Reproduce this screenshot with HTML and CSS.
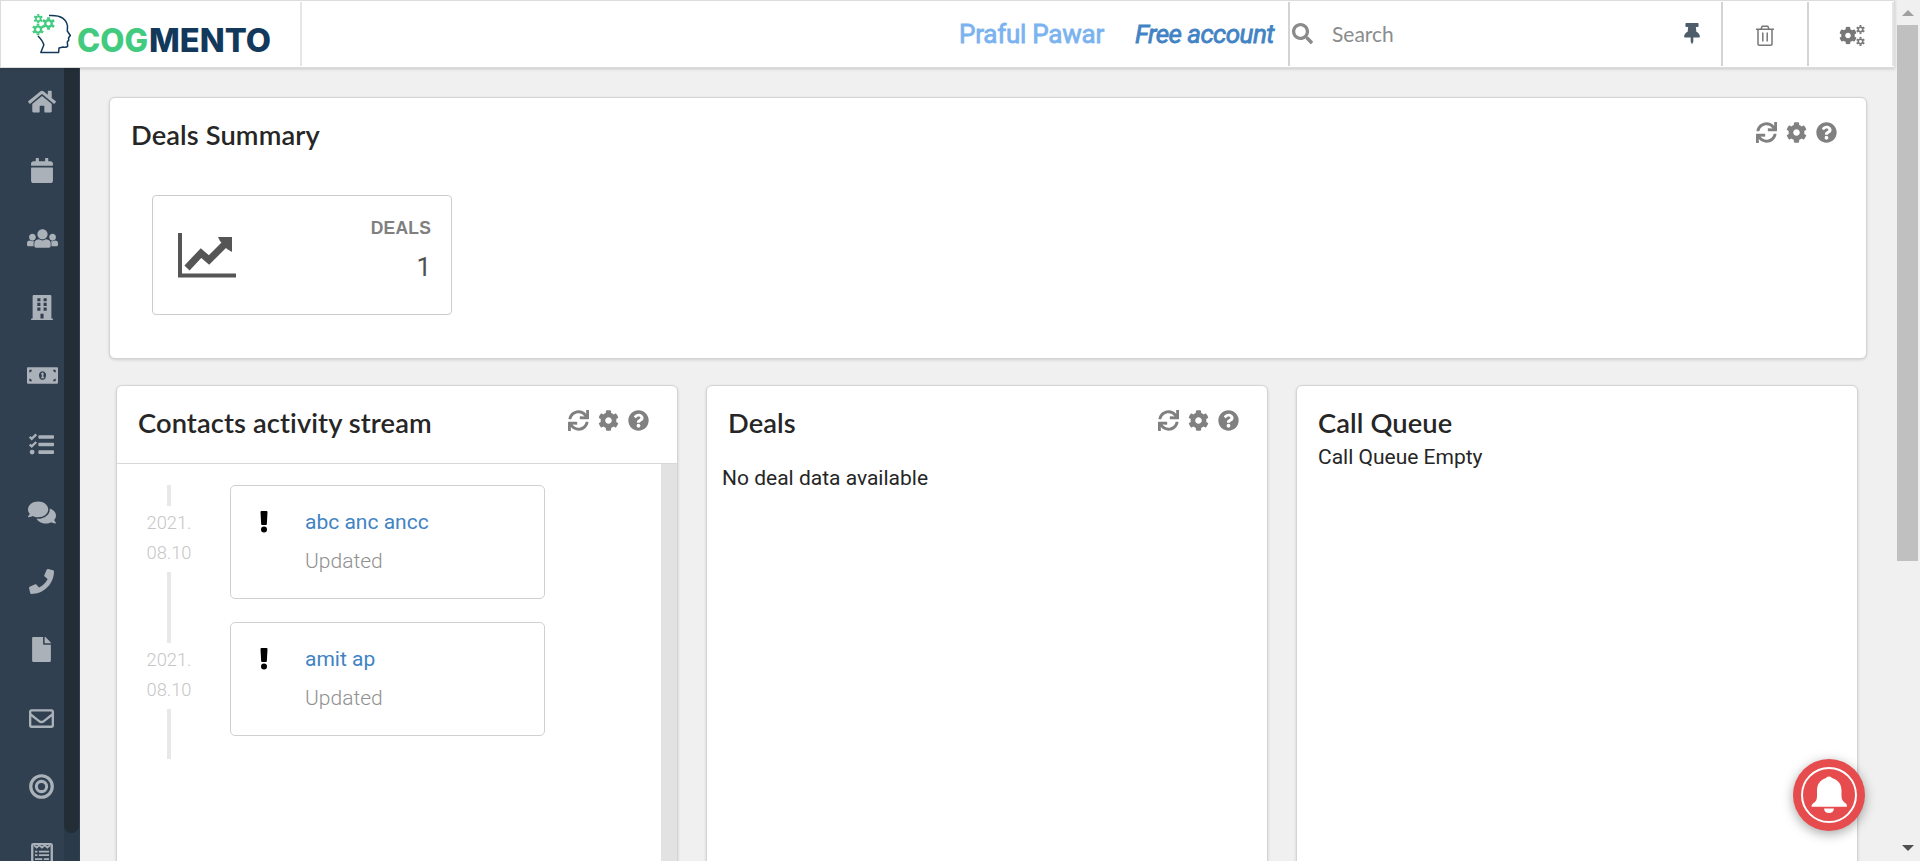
FILE: index.html
```html
<!DOCTYPE html>
<html lang="en">
<head>
<meta charset="utf-8">
<title>Cogmento CRM</title>
<link rel="stylesheet" href="styles.css">
</head>
<body>
<svg class="defs" aria-hidden="true">
  <symbol id="sync" viewBox="0 0 512 512"><path d="M440.935 12.574l3.966 82.766C399.416 41.904 331.674 8 256 8 134.813 8 33.933 94.924 12.296 209.824 10.908 217.193 16.604 224 24.103 224h49.084c5.57 0 10.377-3.842 11.676-9.259C103.407 137.408 172.931 80 256 80c60.893 0 114.512 30.856 146.104 77.801l-101.53-4.865c-6.845-.328-12.574 5.133-12.574 11.986v47.411c0 6.627 5.373 12 12 12h200.333c6.627 0 12-5.373 12-12V12c0-6.627-5.373-12-12-12h-47.411c-6.853 0-12.315 5.729-11.987 12.574zM256 432c-60.895 0-114.517-30.858-146.109-77.805l101.868 4.871c6.845.327 12.573-5.134 12.573-11.986v-47.412c0-6.627-5.373-12-12-12H12c-6.627 0-12 5.373-12 12V500c0 6.627 5.373 12 12 12h47.385c6.863 0 12.328-5.745 11.985-12.599l-4.129-82.575C112.725 470.166 180.405 504 256 504c121.187 0 222.067-86.924 243.704-201.824 1.388-7.369-4.308-14.176-11.807-14.176h-49.084c-5.57 0-10.377 3.842-11.676 9.259C408.593 374.592 339.069 432 256 432z"/></symbol>
  <symbol id="cog" viewBox="0 0 512 512"><path d="M444.788 291.1l42.616 24.599c4.867 2.809 7.126 8.618 5.459 13.985-11.07 35.642-29.97 67.842-54.689 94.586a12.016 12.016 0 0 1-14.832 2.254l-42.584-24.595a191.577 191.577 0 0 1-60.759 35.13v49.182a12.01 12.01 0 0 1-9.377 11.718c-34.956 7.85-72.499 8.256-109.219.007-5.49-1.233-9.403-6.096-9.403-11.723v-49.184a191.555 191.555 0 0 1-60.759-35.13l-42.584 24.595a12.016 12.016 0 0 1-14.832-2.254c-24.718-26.744-43.619-58.944-54.689-94.586-1.667-5.366.592-11.175 5.459-13.985L67.212 291.1a193.48 193.48 0 0 1 0-70.199l-42.616-24.599c-4.867-2.809-7.126-8.618-5.459-13.985 11.07-35.642 29.97-67.842 54.689-94.586a12.016 12.016 0 0 1 14.832-2.254l42.584 24.595a191.577 191.577 0 0 1 60.759-35.13V25.759a12.01 12.01 0 0 1 9.377-11.718c34.956-7.85 72.499-8.256 109.219-.007 5.49 1.233 9.403 6.096 9.403 11.723v49.184a191.555 191.555 0 0 1 60.759 35.13l42.584-24.595a12.016 12.016 0 0 1 14.832 2.254c24.718 26.744 43.619 58.944 54.689 94.586 1.667 5.366-.592 11.175-5.459 13.985L444.788 220.9a193.485 193.485 0 0 1 0 70.2zM336 256c0-44.112-35.888-80-80-80s-80 35.888-80 80 35.888 80 80 80 80-35.888 80-80z"/></symbol>
  <symbol id="help" viewBox="0 0 512 512"><path d="M504 256c0 136.997-111.043 248-248 248S8 392.997 8 256C8 119.083 119.043 8 256 8s248 111.083 248 248zM262.655 90c-54.497 0-89.255 22.957-116.549 63.758-3.536 5.286-2.353 12.415 2.715 16.258l34.699 26.31c5.205 3.947 12.621 3.008 16.665-2.122 17.864-22.658 30.113-35.797 57.303-35.797 20.429 0 45.698 13.148 45.698 32.958 0 14.976-12.363 22.667-32.534 33.976C247.128 238.528 216 254.941 216 296v4c0 6.627 5.373 12 12 12h56c6.627 0 12-5.373 12-12v-1.333c0-28.462 83.186-29.647 83.186-106.667 0-58.002-60.165-102-116.531-102zM256 338c-25.365 0-46 20.635-46 46 0 25.364 20.635 46 46 46s46-20.636 46-46c0-25.365-20.635-46-46-46z"/></symbol>
  <symbol id="bang" viewBox="0 0 20 44"><path d="M5 0h10a2 2 0 0 1 2 2l-1.300 24a2 2 0 0 1-2 2H6.300a2 2 0 0 1-2-2L3 2a2 2 0 0 1 2-2z"/><circle cx="10" cy="37" r="6"/></symbol>
  <symbol id="gear" viewBox="-10 -10 20 20"><circle r="5" fill="none" stroke="currentColor" stroke-width="3.6"/><path fill="none" stroke="currentColor" stroke-width="4.4" d="M0-6.2V-9.8M0 6.2V9.8M5.4-3.1L8.5-4.9M5.4 3.1L8.5 4.9M-5.4-3.1L-8.5-4.9M-5.4 3.1L-8.5 4.9"/></symbol>
</svg>

<div class="app">
  <header class="topbar">
    <div class="brand">
      <svg width="300" height="66" viewBox="0 0 300 66">
        <path class="head" d="M49 15.500C57 15 66 17 67.500 26L67.300 31L70.300 35.500L68.500 38L68.800 40L67.300 42L67.700 46Q66.500 48 63 47L59 48L58.600 52.500H40.800L43.800 45Q43 41 38 36"/>
        <g class="gears">
          <use href="#gear" x="33.500" y="14" width="9.500" height="9.500"/>
          <use href="#gear" x="42" y="17" width="13" height="13"/>
          <use href="#gear" x="32" y="23.500" width="12" height="12"/>
        </g>
        <text class="wordmark green" x="77" y="51.500" textLength="71" lengthAdjust="spacingAndGlyphs">COG</text>
        <text class="wordmark navy" x="149" y="51.500" textLength="122" lengthAdjust="spacingAndGlyphs">MENTO</text>
      </svg>
    </div>
    <div class="account">
      <span class="user">Praful Pawar</span>
      <span class="plan">Free account</span>
    </div>
    <div class="search">
      <svg class="i21 search-icon" viewBox="0 0 512 512"><path d="M505 442.700L405.300 343c-4.500-4.500-10.600-7-17-7H372c27.600-35.300 44-79.700 44-128C416 93.100 322.900 0 208 0S0 93.100 0 208s93.100 208 208 208c48.300 0 92.700-16.400 128-44v16.300c0 6.400 2.500 12.500 7 17l99.700 99.700c9.400 9.400 24.600 9.400 33.900 0l28.300-28.300c9.400-9.400 9.400-24.600.1-34zM208 336c-70.700 0-128-57.200-128-128 0-70.700 57.200-128 128-128 70.700 0 128 57.200 128 128 0 70.700-57.200 128-128 128z"/></svg>
      <span class="search-text">Search</span>
      <svg class="pin" viewBox="0 0 384 512"><path d="M298.028 214.267L285.793 96H328c13.255 0 24-10.745 24-24V24c0-13.255-10.745-24-24-24H56C42.745 0 32 10.745 32 24v48c0 13.255 10.745 24 24 24h42.207L85.972 214.267C37.465 236.820 0 277.261 0 328c0 13.255 10.745 24 24 24h136v104.007c0 1.242.289 2.467.845 3.578l24 48c2.941 5.882 11.364 5.893 14.311 0l24-48a8.008 8.008 0 0 0 .845-3.578V352h136c13.255 0 24-10.745 24-24-.001-51.183-37.983-91.420-85.973-113.733z"/></svg>
    </div>
    <div class="tool trash">
      <svg width="18" height="21" viewBox="0 0 18 21"><path d="M0 4.200H18M5 4L6.200 1.200H11.800L13 4M2 4.500V19Q2 20.200 3.200 20.200H14.800Q16 20.200 16 19V4.500M6.800 7.500V16.500M11.200 7.500V16.500"/></svg>
    </div>
    <div class="tool settings">
      <svg width="27" height="21" viewBox="0 0 27 21"><use href="#cog" x="0" y="1.500" width="18" height="18"/><g class="mini"><use href="#gear" x="17" y="0" width="9" height="9"/><use href="#gear" x="17" y="12" width="9" height="9"/></g></svg>
    </div>
  </header>

  <div class="body">
    <nav class="sidebar">
      <div class="nav-items">
        <svg viewBox="0 0 576 512" width="28"><path d="M488 312.700V456c0 13.300-10.700 24-24 24H348c-6.600 0-12-5.400-12-12V356c0-6.600-5.400-12-12-12h-72c-6.600 0-12 5.400-12 12v112c0 6.600-5.400 12-12 12H112c-13.300 0-24-10.700-24-24V312.700c0-3.600 1.600-7 4.400-9.300l188-154.800c4.400-3.600 10.800-3.600 15.300 0l188 154.800c2.700 2.300 4.300 5.700 4.300 9.300zm83.600-60.900L488 182.900V44.400c0-6.600-5.400-12-12-12h-56c-6.600 0-12 5.400-12 12V117l-89.500-73.700c-17.700-14.600-43.300-14.600-61 0L4.400 251.800c-5.100 4.200-5.800 11.800-1.600 16.900l25.500 31c4.200 5.100 11.800 5.800 16.900 1.600l235.200-193.700c4.400-3.600 10.800-3.600 15.300 0l235.200 193.700c5.100 4.200 12.700 3.500 16.900-1.600l25.500-31c4.200-5.200 3.400-12.700-1.700-16.900z"/></svg>
        <svg viewBox="0 0 448 512" width="22"><path d="M12 192h424c6.600 0 12 5.400 12 12v260c0 26.500-21.500 48-48 48H48c-26.500 0-48-21.500-48-48V204c0-6.600 5.400-12 12-12zm436-44v-36c0-26.500-21.500-48-48-48h-48V12c0-6.600-5.400-12-12-12h-40c-6.600 0-12 5.400-12 12v52H160V12c0-6.600-5.400-12-12-12h-40c-6.600 0-12 5.400-12 12v52H48C21.500 64 0 85.500 0 112v36c0 6.600 5.400 12 12 12h424c6.600 0 12-5.400 12-12z"/></svg>
        <svg class="wide" viewBox="0 0 640 512" width="31"><path d="M320 64c57.990 0 105 47.010 105 105s-47.010 105-105 105-105-47.010-105-105S262.010 64 320 64zm113.463 217.366l-39.982-9.996c-49.168 35.365-108.766 27.473-146.961 0l-39.982 9.996C174.485 289.379 152 318.177 152 351.216V412c0 19.882 16.118 36 36 36h264c19.882 0 36-16.118 36-36v-60.784c0-33.039-22.485-61.837-54.537-69.850zM528 300c38.660 0 70-31.340 70-70s-31.340-70-70-70-70 31.340-70 70 31.340 70 70 70zm-416 0c38.660 0 70-31.340 70-70s-31.340-70-70-70-70 31.340-70 70 31.340 70 70 70zm24 112v-60.784c0-16.551 4.593-32.204 12.703-45.599-29.988 14.720-63.336 8.708-85.690-7.370l-26.655 6.664C14.990 310.252 0 329.452 0 351.477V392c0 13.255 10.745 24 24 24h112.169a52.417 52.417 0 0 1-.169-4zm467.642-107.090l-26.655-6.664c-27.925 20.086-60.890 19.233-85.786 7.218C499.369 318.893 504 334.601 504 351.216V412c0 1.347-.068 2.678-.169 4H616c13.255 0 24-10.745 24-24v-40.523c0-22.025-14.990-41.225-36.358-46.567z"/></svg>
        <svg viewBox="0 0 448 512" width="22"><path fill-rule="evenodd" d="M436 480h-20V24c0-13.300-10.700-24-24-24H56C42.700 0 32 10.700 32 24v456H12c-6.600 0-12 5.400-12 12v20h448v-20c0-6.600-5.400-12-12-12zM128 64h64v64h-64zM256 64h64v64h-64zM128 160h64v64h-64zM256 160h64v64h-64zM128 256h64v64h-64zM256 256h64v64h-64zM192 384h64v96h-64z"/></svg>
        <svg class="wide" viewBox="0 0 640 512" width="31"><path fill-rule="evenodd" d="M16 88h608q16 0 16 16v304q0 16-16 16H16q-16 0-16-16V104q0-16 16-16zM48 136v56q48 0 56-56zM592 136v56q-48 0-56-56zM48 376v-56q48 0 56 56zM592 376v-56q-48 0-56 56zM320 168a74 88 0 1 0 .1 0z"/><path d="M320 196L292 210V234H306V290H288V314H358V290H340V196z"/></svg>
        <svg viewBox="0 0 512 512" width="25"><path d="M208 64h288q16 0 16 16v40q0 16-16 16H208q-16 0-16-16V80q0-16 16-16zM208 220h288q16 0 16 16v40q0 16-16 16H208q-16 0-16-16v-40q0-16 16-16zM208 376h288q16 0 16 16v40q0 16-16 16H208q-16 0-16-16v-40q0-16 16-16z"/><circle cx="64" cy="412" r="50"/><path fill="none" stroke="currentColor" stroke-width="48" d="M14 100L56 140L148 48M14 256L56 296L148 204"/></svg>
        <svg viewBox="0 0 576 512" width="28"><path d="M416 192c0-88.400-93.100-160-208-160S0 103.600 0 192c0 34.300 14.100 65.900 38 92-13.400 30.200-35.500 54.200-35.800 54.500-2.200 2.300-2.800 5.700-1.500 8.700S4.800 352 8 352c36.600 0 66.900-12.300 88.700-25 32.200 15.700 70.300 25 111.300 25 114.900 0 208-71.600 208-160zm122 220c23.900-26 38-57.700 38-92 0-66.900-53.500-124.200-129.300-148.100.9 6.600 1.300 13.300 1.300 20.100 0 105.900-107.700 192-240 192-10.800 0-21.300-.8-31.700-1.900C207.800 439.600 281.800 480 368 480c41 0 79.100-9.200 111.300-25 21.800 12.700 52.100 25 88.700 25 3.200 0 6.100-1.900 7.300-4.800 1.300-2.900.7-6.300-1.500-8.700-.3-.3-22.400-24.200-35.800-54.500z"/></svg>
        <svg viewBox="0 0 512 512" width="25"><path d="M493.400 24.600l-104-24c-11.300-2.600-22.900 3.300-27.500 13.900l-48 112c-4.200 9.800-1.400 21.300 6.900 28l60.600 49.600c-36 76.700-98.900 140.500-177.200 177.200l-49.600-60.600c-6.800-8.300-18.200-11.100-28-6.900l-112 48C3.900 366.500-2 378.100.6 389.400l24 104C27.100 504.200 36.700 512 48 512c256.100 0 464-207.500 464-464 0-11.200-7.700-20.900-18.600-23.400z"/></svg>
        <svg viewBox="0 0 384 512" width="19"><path d="M224 136V0H24C10.700 0 0 10.700 0 24v464c0 13.300 10.700 24 24 24h336c13.300 0 24-10.700 24-24V160H248c-13.200 0-24-10.800-24-24zm160-14.100v6.100H256V0h6.100c6.400 0 12.500 2.500 17 7l97.900 98c4.500 4.500 7 10.600 7 16.900z"/></svg>
        <svg viewBox="0 0 512 512" width="25"><path d="M464 64H48C21.490 64 0 85.490 0 112v288c0 26.510 21.490 48 48 48h416c26.510 0 48-21.490 48-48V112c0-26.510-21.490-48-48-48zm0 48v40.805c-22.422 18.259-58.168 46.651-134.587 106.490-16.841 13.247-50.201 45.072-73.413 44.701-23.208.375-56.579-31.459-73.413-44.701C106.180 199.465 70.425 171.067 48 152.805V112h416zM48 400V214.398c22.914 18.251 55.409 43.862 104.938 82.646 21.857 17.205 60.134 55.186 103.062 54.955 42.717.231 80.509-37.199 103.053-54.947 49.528-38.783 82.032-64.401 104.947-82.653V400H48z"/></svg>
        <svg viewBox="0 0 512 512" width="25"><g fill="none" stroke="currentColor"><circle cx="256" cy="256" r="220" stroke-width="66"/><circle cx="256" cy="256" r="105" stroke-width="62"/></g></svg>
        <svg viewBox="0 0 448 512" width="22"><g fill="none" stroke="currentColor"><rect x="24" y="24" width="400" height="464" rx="24" stroke-width="48"/><path stroke-width="34" d="M60 50L115 95L168 50L224 95L280 50L333 95L388 50"/><path stroke-width="36" d="M80 176H130M160 176H368M80 250H130M160 250H368M80 330H230M262 330H368"/></g></svg>
      </div>
      <div class="nav-scroll"><div class="nav-thumb"></div></div>
    </nav>

    <main class="content">
      <section class="card summary">
        <div class="card-head">
          <h2>Deals Summary</h2>
          <div class="actions"><svg><use href="#sync"/></svg><svg><use href="#cog"/></svg><svg><use href="#help"/></svg></div>
        </div>
        <div class="stat">
          <svg width="60" height="46" viewBox="0 0 60 46"><path class="axis" d="M3 0V42.500H59"/><path class="trend" d="M10 35L24 20L32 27L49 10"/><path class="tip" d="M41 4H55V19L50 16L43 8z"/></svg>
          <div class="stat-text"><div class="stat-label">DEALS</div><div class="stat-value">1</div></div>
        </div>
      </section>

      <div class="columns">
        <section class="card">
          <div class="card-head ruled">
            <h2>Contacts activity stream</h2>
            <div class="actions"><svg><use href="#sync"/></svg><svg><use href="#cog"/></svg><svg><use href="#help"/></svg></div>
          </div>
          <div class="stream">
            <div class="events">
              <div class="event">
                <div class="when"><i class="line first"></i><span>2021.</span><span>08.10</span><i class="line grow"></i></div>
                <div class="entry"><svg><use href="#bang"/></svg><div><a>abc anc ancc</a><p>Updated</p></div></div>
              </div>
              <div class="event">
                <div class="when"><i class="line first"></i><span>2021.</span><span>08.10</span><i class="line grow"></i></div>
                <div class="entry"><svg><use href="#bang"/></svg><div><a>amit ap</a><p>Updated</p></div></div>
              </div>
            </div>
            <div class="stream-scroll"></div>
          </div>
        </section>
        <section class="card">
          <div class="card-head">
            <h2>Deals</h2>
            <div class="actions"><svg><use href="#sync"/></svg><svg><use href="#cog"/></svg><svg><use href="#help"/></svg></div>
          </div>
          <p class="no-deals">No deal data available</p>
        </section>
        <section class="card">
          <div class="card-head"><h2>Call Queue</h2></div>
          <p class="queue">Call Queue Empty</p>
        </section>
      </div>
    </main>
  </div>
</div>

<div class="page-scroll">
  <svg width="12" height="6" viewBox="0 0 12 6"><path fill="#a0a0a0" d="M6 0L12 6H0z"/></svg>
  <div class="page-thumb"></div>
  <svg class="down" width="12" height="6" viewBox="0 0 12 6"><path fill="#505050" d="M6 6L12 0H0z"/></svg>
</div>

<div class="bell">
  <svg width="72" height="72" viewBox="0 0 72 72"><circle cx="36" cy="36" r="27" fill="none" stroke="#fff" stroke-width="2"/><path fill="#fff" d="M36 17.500C38 17.500 38.500 18.300 38.800 19C45 20.500 48.500 25 48.500 31.500V37C48.500 41 50.500 43 53 44.500Q54 45.200 54 47.800H18.500Q18.500 45.200 20 44.500C22.500 43 24 41 24 37V31.500C24 25 27.500 20.500 33.200 19C33.500 18.300 34 17.500 36 17.500zM31 49.500H41Q40.500 54 36 54T31 49.500z"/></svg>
</div>
</body>
</html>
```
FILE: styles.css
```css
* { box-sizing: border-box; }
html, body { height: 100%; }
body {
  margin: 0;
  display: flex;
  overflow: hidden;
  background: #f0f0f0;
  font-family: Roboto, "Liberation Sans", sans-serif;
  font-size: 21px;
  color: #262626;
}
h2, p { margin: 0; }
svg { display: block; flex: none; fill: currentColor; }
.defs { display: none; }

.app { width: 1895px; height: 861px; display: flex; flex-direction: column; flex: none; }

/* Top bar */
.topbar {
  height: 68px;
  flex: none;
  display: flex;
  background: #fff;
  border: 1px solid #dcdcdc;
  box-shadow: 0 1px 3px rgba(34, 36, 38, .2);
  z-index: 1;
  padding: 1px 0;
}
.brand { width: 301px; border-right: 2px solid #e6e6e6; height: 64px; }
.brand svg { margin: -2px 0 0 -1px; }
.head { fill: none; stroke: #12395b; stroke-width: 1.5; stroke-linejoin: round; }
.gears { color: #42cb7f; }
.wordmark { font: 800 32px Inter, sans-serif; }
.green { fill: #42cb7f; }
.navy { fill: #12395b; }
.account { flex: 1; display: flex; justify-content: flex-end; padding-right: 14px; gap: 31px; line-height: 64px; font-size: 26px; white-space: nowrap; -webkit-text-stroke: .8px currentColor; }
.user { color: #7ab3ef; letter-spacing: -.25px; }
.plan { color: #4183c4; font-style: italic; letter-spacing: -.55px; }
.search { width: 435px; border-left: 2px solid #d4d4d5; border-right: 2px solid #d4d4d5; display: flex; align-items: center; padding: 0 21px 0 2px; }
.i21 { width: 21px; height: 21px; }
.search-icon { color: #8b8b8b; margin-top: -2px; }
.search-text { font: 21px/24px Lato, sans-serif; color: #8c8c8c; margin-left: 19px; flex: 1; }
.pin { width: 16px; height: 21px; color: #4f5d6b; margin-top: -2px; }
.tool { width: 86px; border-right: 2px solid #d4d4d5; display: flex; align-items: center; justify-content: center; color: #777; padding-top: 3px; }
.trash svg { fill: none; stroke: currentColor; stroke-width: 1.5; }
.settings { width: 85px; border-right-color: #e4e4e4; padding-left: 4px; }

/* Sidebar */
.body { flex: 1; display: flex; min-height: 0; }
.sidebar { width: 80px; background: #304050; display: flex; overflow: hidden; flex: none; }
.nav-items { width: 64px; padding: 21px 0 0 19px; display: flex; flex-direction: column; gap: 43.5px; color: #aab1b9; align-items: center; }
.nav-items svg { height: 25px; }
.nav-items .wide { margin-right: -2px; }
.nav-scroll { width: 16px; background: #2a3a49; border-right: 1px solid #304050; }
.nav-thumb { height: 765px; background: #222d35; border-radius: 0 0 8px 8px; }

/* Cards */
.content { flex: 1; padding: 29px 28px 0 29px; display: flex; flex-direction: column; gap: 26px; min-height: 0; overflow: hidden; }
.card { background: #fff; border: 1px solid #d4d4d5; border-radius: 6px; box-shadow: 0 1px 3px rgba(0, 0, 0, .14); overflow: hidden; }
.summary { height: 262px; flex: none; }
.card-head { height: 78px; padding: 22px 28px 0 21px; display: flex; justify-content: space-between; }
.summary .card-head { padding-right: 29px; }
.ruled { border-bottom: 1px solid #d8d8d9; }
h2 { font: 600 27.3px/30px Lato, sans-serif; letter-spacing: .1px; color: #262626; white-space: nowrap; font-variant-ligatures: none; }
.actions { display: flex; gap: 9px; color: #808080; margin-top: 2px; }
.actions svg { width: 21px; height: 21px; }
.stat { width: 300px; height: 120px; margin: 19px 0 0 42px; border: 1px solid #ccc; border-radius: 4px; display: flex; justify-content: space-between; padding: 37px 20px 0 24px; }
.axis { fill: none; stroke: #555; stroke-width: 4; }
.trend { fill: none; stroke: #555; stroke-width: 7; }
.tip { fill: #555; }
.stat-text { margin-top: -16px; text-align: right; }
.stat-label { font: 700 17.5px/22px "Liberation Sans", sans-serif; color: #808080; letter-spacing: .2px; }
.stat-value { font-size: 26px; line-height: 30px; margin-top: 13px; color: #505050; }

.columns { flex: none; height: 600px; display: grid; grid-template-columns: repeat(3, 562px); gap: 28px; padding-left: 7px; }
.columns .card { display: flex; flex-direction: column; }
.columns .card-head { flex: none; }
.stream { flex: 1; display: flex; justify-content: space-between; }
.stream-scroll { width: 16px; background: #e2e2e2; }
.events { padding: 21px 0 0 23px; }
.event { display: flex; height: 137px; }
.when { width: 58px; display: flex; flex-direction: column; align-items: center; font-size: 18.3px; line-height: 30px; color: #c6c6c6; font-weight: 300; }
.line { width: 4px; background: #e8e8e8; }
.first { height: 21px; margin-bottom: 2px; }
.grow { flex: 1; margin-top: 4px; }
.entry { width: 315px; height: 114px; margin-left: 32px; border: 1px solid #d0d0d1; border-radius: 5px; display: flex; padding: 22px 0 0 28px; gap: 36px; line-height: 28px; }
.entry svg { width: 10px; height: 22px; color: #000; margin-top: 3px; }
.entry a { color: #4183c4; display: block; }
.entry p { color: #909090; font-weight: 300; margin-top: 11px; }
.no-deals { padding: 0 15px; line-height: 28px; }
.queue { padding-left: 21px; margin-top: -21px; line-height: 28px; }

/* Window scrollbar */
.page-scroll { width: 25px; height: 861px; display: flex; flex-direction: column; align-items: center; padding: 10px 0; }
.page-thumb { width: 21px; height: 536px; background: #c0c0c0; margin-top: 9px; }
.down { margin-top: auto; }

/* Floating notification button */
.bell { position: absolute; left: 1793px; top: 759px; width: 72px; height: 72px; border-radius: 50%; background: #e64b4d; box-shadow: 0 3px 12px rgba(0, 0, 0, .35); z-index: 2; }
```
